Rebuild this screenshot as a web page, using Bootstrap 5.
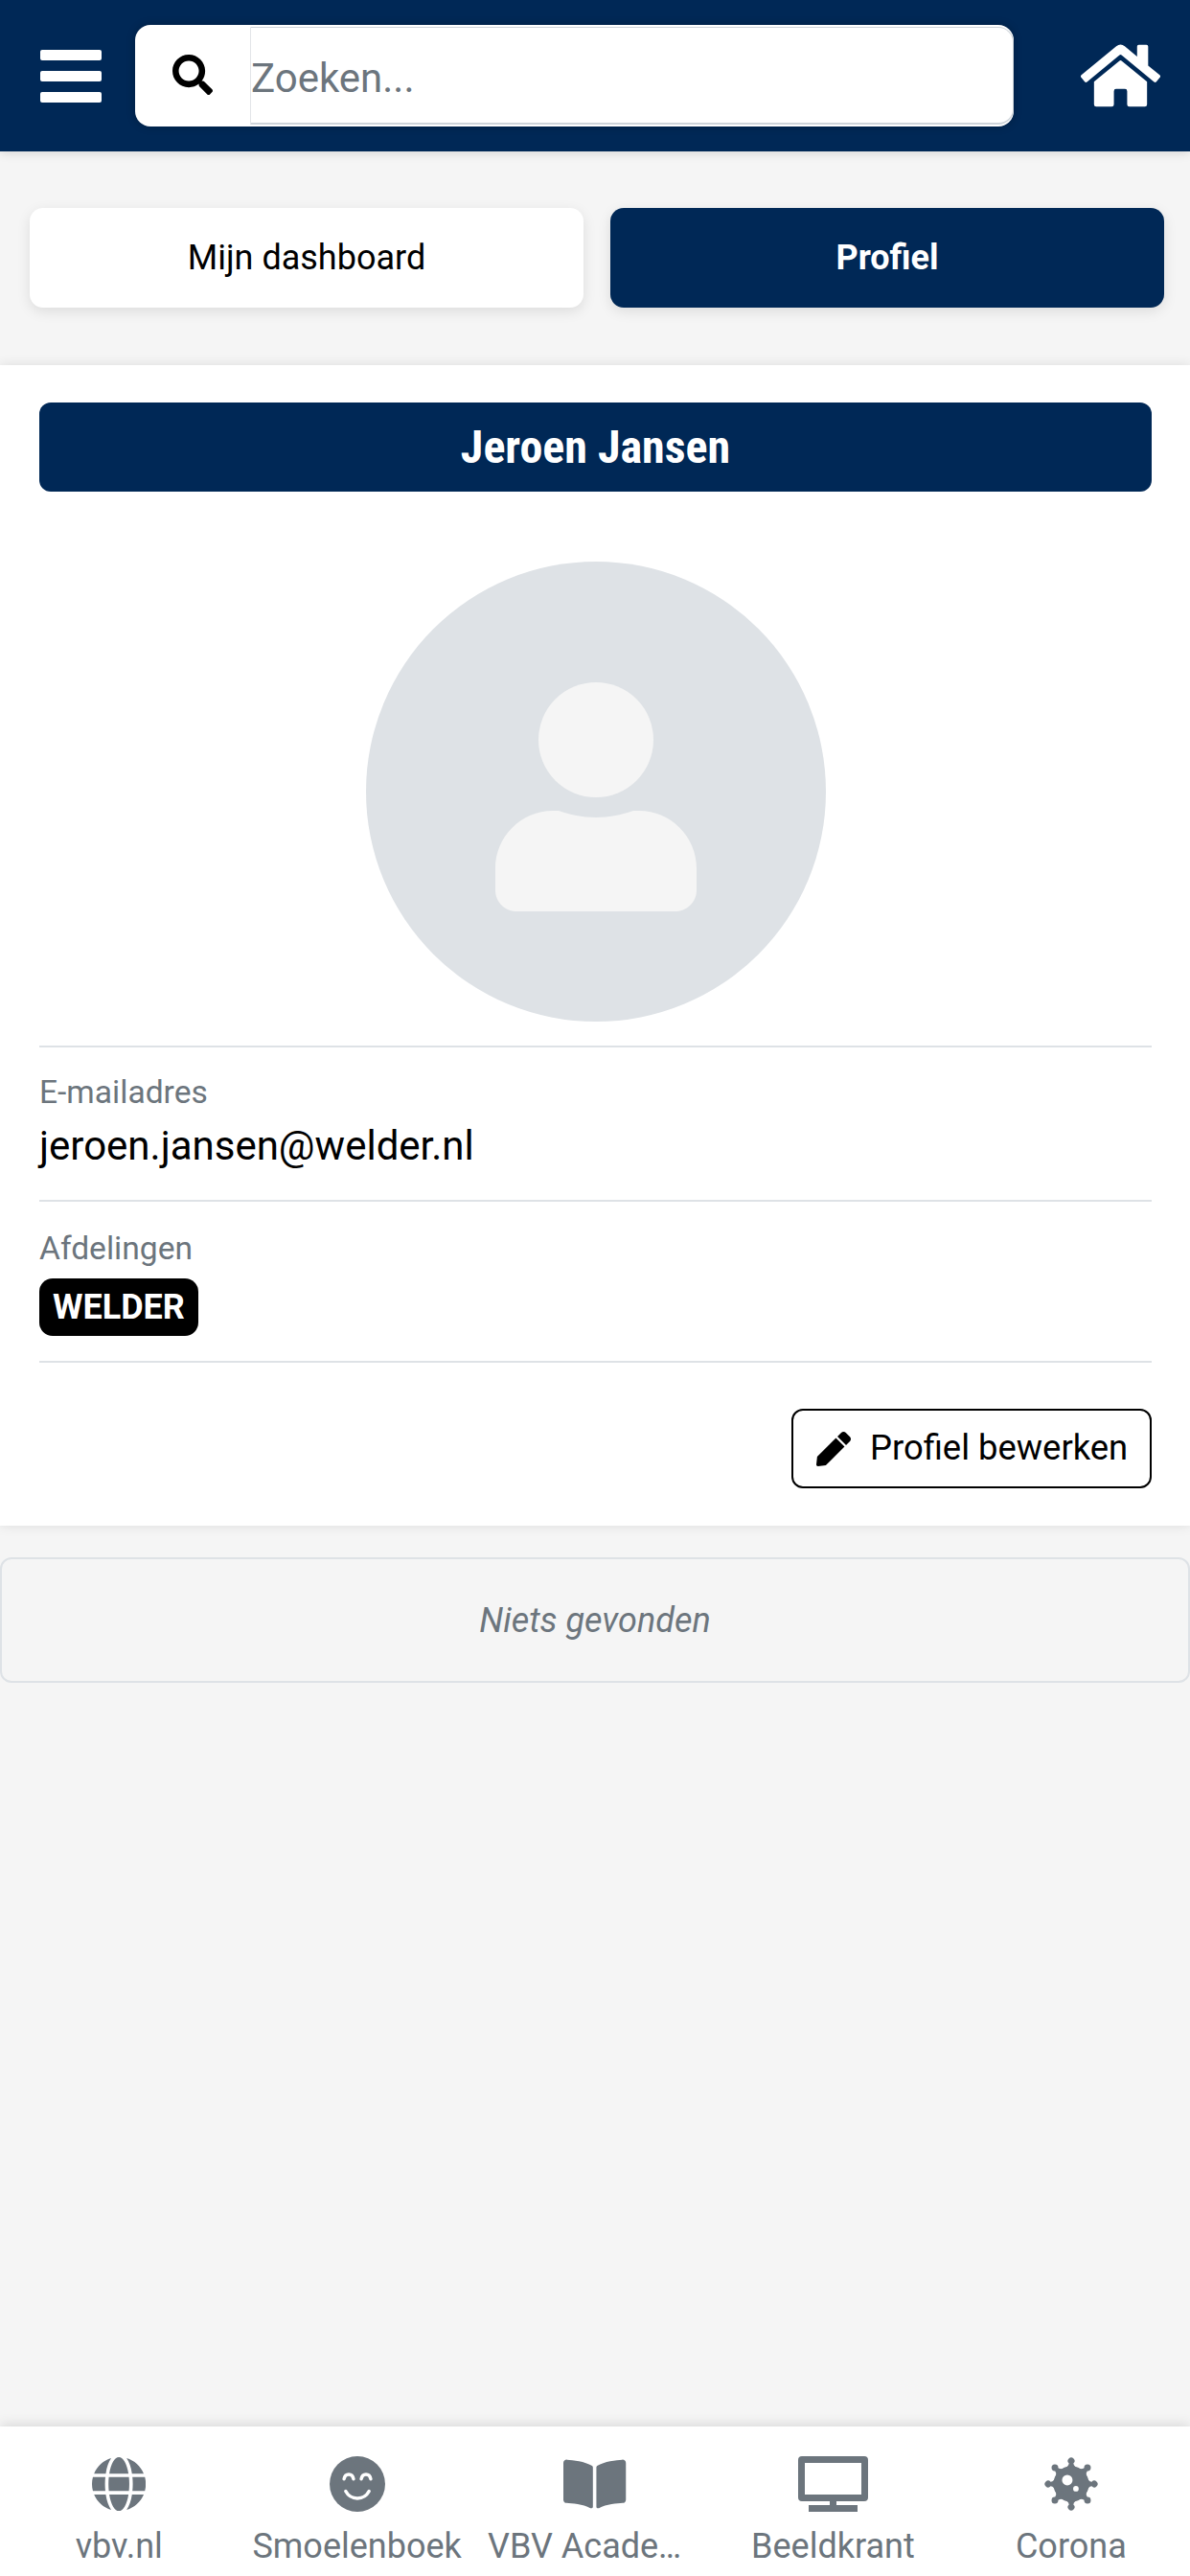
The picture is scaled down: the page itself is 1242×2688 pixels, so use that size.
<!DOCTYPE html>
<html lang="nl">
<head>
  <meta charset="UTF-8">
  <meta name="viewport" content="width=device-width, initial-scale=1.0">
  <title>Profiel</title>
  <link href="https://cdn.jsdelivr.net/npm/bootstrap@5.3.0/dist/css/bootstrap.min.css" rel="stylesheet">
  <style>
    body {
      height: 2688px;
      background-color: #f5f5f5;
      font-family: Roboto, "Liberation Sans", sans-serif;
      font-size: 36px;
      color: #000;
      overflow: hidden;
    }
    .top-bar {
      height: 158px;
      background-color: #002856;
      padding: 26px 31px 26px 42px;
      box-shadow: 0 2px 10px rgba(0, 0, 0, .12);
    }
    .burger { width: 64px; margin-right: 35px; gap: 11px; }
    .burger span { display: block; height: 11px; border-radius: 2px; background: #fff; }
    .search-box { height: 106px; width: 917px; background: #fff; border-radius: 16px; box-shadow: 0 0 8px rgba(0, 0, 0, .25); }
    .search-icon { width: 120px; padding-bottom: 2px; }
    .search-icon svg { width: 42px; height: 42px; }
    .search-input { border: 0; border-left: 1px solid #e2e5e8; border-bottom: 2px solid #ced4da; border-top: 1px solid #ced4da; border-right: 1px solid #ced4da; border-radius: 0 16px 16px 0; margin: 2px 0; font-size: 42px; color: #6c757d; padding: 5px 0 0; outline: 0; }
    .search-input::placeholder { color: #6c757d; opacity: 1; }
    .home-link { margin-left: 70px; }
    .home-link svg { width: 83px; height: 74px; display: block; }
    .tab-row { padding: 59px 27px 60px 31px; gap: 28px; }
    .tab-btn { flex: 1 1 0; height: 104px; border: 0; border-radius: 14px; background: #fff; color: #000; font-size: 36px; box-shadow: 0 4px 14px rgba(0, 0, 0, .1); }
    .tab-btn.is-on { background: #002856; color: #fff; font-weight: 700; }
    .profile-panel { background: #fff; padding: 39px 40px 39px 41px; box-shadow: 0 0 12px rgba(0, 0, 0, .1); }
    .name-bar { height: 93px; background: #002856; color: #fff; border-radius: 12px; font-size: 48px; font-weight: 700; font-stretch: condensed; }
    .avatar-wrap { padding: 73px 0 25px; }
    .avatar-wrap svg { width: 480px; height: 480px; display: block; }
    .field-row { border-top: 2px solid #dee2e6; }
    .field-mail { padding: 23px 0 25px; }
    .field-dept { padding: 25px 0 26px; }
    .field-label { font-size: 33.6px; line-height: 48px; color: #6c757d; }
    .field-value { font-size: 42px; line-height: 63px; }
    .dept-tag { background: #000; color: #fff; font-size: 36px; font-weight: 700; line-height: 60px; margin-top: 7px; padding: 0 14px; border-radius: 14px; }
    .edit-btn { height: 83px; width: 376px; border: 2px solid #000; border-radius: 12px; background: #fff; font-size: 36.4px; font-weight: 400; color: #000; padding: 0 0 0 24px; gap: 20px; }
    .edit-btn svg { width: 36px; height: 36px; }
    .empty-box { height: 131px; margin-top: 33px; border: 2px solid #dee2e6; border-radius: 12px; font-size: 36px; font-style: italic; color: #6c757d; }
    .bottom-nav { height: 156px; background: #fff; box-shadow: 0 -2px 12px rgba(0, 0, 0, .12); }
    .nav-cell { flex: 1 1 0; min-width: 0; padding-top: 31px; color: #6c757d; text-decoration: none; font-size: 36px; line-height: 1.2; }
    .nav-cell svg { height: 58px; display: block; margin-bottom: 15px; }
    .nav-text { max-width: 224px; overflow: hidden; white-space: nowrap; text-overflow: ellipsis; }
    .nav-long { width: 224px; }
  </style>
</head>
<body class="d-flex flex-column">
  <header class="top-bar d-flex align-items-center">
    <div class="burger d-flex flex-column flex-shrink-0"><span></span><span></span><span></span></div>
    <div class="search-box d-flex flex-shrink-0">
      <div class="search-icon d-flex align-items-center justify-content-center flex-shrink-0">
        <svg viewBox="0 0 512 512" fill="#000"><path d="M505 442.7L405.3 343c-4.5-4.5-10.6-7-17-7H372c27.6-35.3 44-79.7 44-128C416 93.1 322.9 0 208 0S0 93.1 0 208s93.1 208 208 208c48.3 0 92.7-16.4 128-44v16.3c0 6.4 2.5 12.5 7 17l99.7 99.7c9.4 9.4 24.6 9.4 33.9 0l28.3-28.3c9.4-9.4 9.4-24.6.1-34zM208 336c-70.7 0-128-57.2-128-128 0-70.7 57.2-128 128-128 70.7 0 128 57.2 128 128 0 70.7-57.2 128-128 128z"/></svg>
      </div>
      <input class="search-input flex-grow-1 w-100" type="text" placeholder="Zoeken...">
    </div>
    <a class="home-link" href="#">
      <svg viewBox="0 0 576 512" fill="#fff"><path d="M280.37 148.26L96 300.11V464a16 16 0 0 0 16 16l112.06-.29a16 16 0 0 0 15.92-16V368a16 16 0 0 1 16-16h64a16 16 0 0 1 16 16v95.64a16 16 0 0 0 16 16.05L464 480a16 16 0 0 0 16-16V300L295.67 148.26a12.19 12.19 0 0 0-15.3 0zM571.6 251.47L488 182.56V44.05a12 12 0 0 0-12-12h-56a12 12 0 0 0-12 12v72.61L318.47 43a48 48 0 0 0-61 0L4.34 251.47a12 12 0 0 0-1.6 16.9l25.5 31A12 12 0 0 0 45.15 301l235.22-193.74a12.19 12.19 0 0 1 15.3 0L530.9 301a12 12 0 0 0 16.9-1.6l25.5-31a12 12 0 0 0-1.7-16.93z"/></svg>
    </a>
  </header>

  <div class="tab-row d-flex">
    <button class="tab-btn" type="button">Mijn dashboard</button>
    <button class="tab-btn is-on" type="button">Profiel</button>
  </div>

  <section class="profile-panel">
    <div class="name-bar d-flex align-items-center justify-content-center">Jeroen Jansen</div>
    <div class="avatar-wrap d-flex justify-content-center">
      <svg viewBox="0 0 480 480" fill="#f5f5f5">
        <circle cx="240" cy="240" r="240" fill="#dee2e6"/>
        <circle cx="240" cy="186" r="60"/>
        <path d="M135 343v-23c0-33 27-60 60-60h6c12 4 24 7 39 7s27-3 39-7h6c33 0 60 27 60 60v23c0 12-10 22-22 22H157c-12 0-22-10-22-22z"/>
      </svg>
    </div>
    <div class="field-row field-mail">
      <div class="field-label">E-mailadres</div>
      <div class="field-value">jeroen.jansen@welder.nl</div>
    </div>
    <div class="field-row field-dept">
      <div class="field-label">Afdelingen</div>
      <span class="dept-tag d-inline-block">WELDER</span>
    </div>
    <div class="field-row d-flex justify-content-end pt-5">
      <button class="edit-btn d-flex align-items-center" type="button">
        <svg viewBox="0 0 512 512" fill="#000"><path d="M290.74 93.24l128.02 128.02-277.99 277.99-114.14 12.6C11.35 513.54-1.56 500.62.14 485.34l12.7-114.22 277.9-278.88zm207.2-19.06l-60.11-60.11c-18.75-18.75-49.16-18.75-67.91 0l-56.55 56.55 128.02 128.02 56.55-56.55c18.75-18.76 18.75-49.16 0-67.91z"/></svg>
        Profiel bewerken
      </button>
    </div>
  </section>

  <div class="empty-box d-flex align-items-center justify-content-center">Niets gevonden</div>

  <nav class="bottom-nav d-flex mt-auto">
    <a class="nav-cell d-flex flex-column align-items-center" href="#">
      <svg viewBox="0 0 496 512" fill="#6c757d"><path d="M336.5 160C322 70.7 287.8 8 248 8s-74 62.7-88.5 152h177zM152 256c0 22.2 1.2 43.5 3.3 64h185.3c2.1-20.5 3.3-41.8 3.3-64s-1.2-43.5-3.3-64H155.3c-2.1 20.5-3.3 41.8-3.3 64zm324.7-96c-28.6-67.9-86.5-120.4-158-141.6 24.4 33.8 41.2 84.7 50 141.6h108zM177.2 18.4C105.8 39.6 47.8 92.1 19.3 160h108c8.7-56.9 25.5-107.8 49.9-141.6zM487.4 192H372.7c2.1 21 3.3 42.5 3.3 64s-1.2 43-3.3 64h114.6c5.5-20.5 8.6-41.8 8.6-64s-3.1-43.5-8.5-64zM120 256c0-21.5 1.2-43 3.3-64H8.6C3.2 212.5 0 233.8 0 256s3.2 43.5 8.6 64h114.6c-2-21-3.2-42.5-3.2-64zm39.5 96c14.5 89.3 48.7 152 88.5 152s74-62.7 88.5-152h-177zm159.3 141.6c71.4-21.2 129.4-73.7 158-141.6h-108c-8.8 56.9-25.6 107.8-50 141.6zM19.3 352c28.6 67.9 86.5 120.4 158 141.6-24.4-33.8-41.2-84.7-50-141.6h-108z"/></svg>
      <span class="nav-text">vbv.nl</span>
    </a>
    <a class="nav-cell d-flex flex-column align-items-center" href="#">
      <svg viewBox="0 0 100 100"><circle cx="50" cy="50" r="50" fill="#6c757d"/><g fill="none" stroke="#fff" stroke-width="6" stroke-linecap="round"><path d="M26 41c2-11 15-11 17 0M57 41c2-11 15-11 17 0"/><path d="M29 63c9 17 33 17 42 0"/></g></svg>
      <span class="nav-text">Smoelenboek</span>
    </a>
    <a class="nav-cell d-flex flex-column align-items-center" href="#">
      <svg viewBox="0 0 576 512" fill="#6c757d"><path d="M542.22 32.05c-54.8 3.11-163.72 14.43-230.96 55.59-4.64 2.84-7.27 7.89-7.27 13.17v363.87c0 11.55 12.63 18.85 23.28 13.49 69.18-34.82 169.23-44.32 218.7-46.92 16.89-.89 30.02-14.43 30.02-30.66V62.75c.01-17.71-15.35-31.74-33.77-30.7zM264.73 87.64C197.5 46.48 88.58 35.17 33.78 32.05 15.36 31.01 0 45.04 0 62.75V400.6c0 16.24 13.13 29.78 30.02 30.66 49.49 2.6 149.59 12.11 218.77 46.95 10.62 5.35 23.21-1.94 23.21-13.46V100.63c0-5.29-2.62-10.14-7.27-12.99z"/></svg>
      <span class="nav-text nav-long">VBV Academie</span>
    </a>
    <a class="nav-cell d-flex flex-column align-items-center" href="#">
      <svg viewBox="0 0 73 58" fill="#6c757d"><path fill-rule="evenodd" d="M4 0h65a4 4 0 0 1 4 4v39a4 4 0 0 1-4 4H40v4h22v7H11v-7h22v-4H4a4 4 0 0 1-4-4V4a4 4 0 0 1 4-4zM7 7v33h59V7z"/></svg>
      <span class="nav-text">Beeldkrant</span>
    </a>
    <a class="nav-cell d-flex flex-column align-items-center" href="#">
      <svg viewBox="0 0 100 100" fill="#6c757d">
        <defs><path id="virusSpike" d="M36 22Q45 20 46 13a6 6 0 1 1 8 0Q55 20 64 22L50 50z"/></defs>
        <use href="#virusSpike"/>
        <use href="#virusSpike" transform="rotate(45 50 50)"/>
        <use href="#virusSpike" transform="rotate(90 50 50)"/>
        <use href="#virusSpike" transform="rotate(135 50 50)"/>
        <use href="#virusSpike" transform="rotate(180 50 50)"/>
        <use href="#virusSpike" transform="rotate(225 50 50)"/>
        <use href="#virusSpike" transform="rotate(270 50 50)"/>
        <use href="#virusSpike" transform="rotate(315 50 50)"/>
        <circle cx="50" cy="50" r="32"/>
        <circle cx="43" cy="43" r="9.5" fill="#fff"/>
        <circle cx="58.5" cy="58.5" r="5" fill="#fff"/>
      </svg>
      <span class="nav-text">Corona</span>
    </a>
  </nav>

  <script src="https://cdn.jsdelivr.net/npm/bootstrap@5.3.0/dist/js/bootstrap.bundle.min.js"></script>
</body>
</html>
